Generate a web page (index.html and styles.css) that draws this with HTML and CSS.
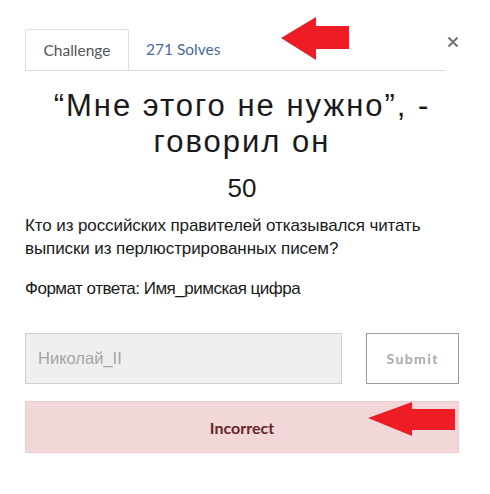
FILE: index.html
```html
<!DOCTYPE html>
<html lang="ru">
<head>
<meta charset="utf-8">
<link rel="stylesheet" href="styles.css">
</head>
<body>
<div class="modal">
  <div class="header">
    <ul class="tabs">
      <li class="tab active">Challenge</li>
      <li class="tab link">271 Solves</li>
    </ul>
    <button class="close" aria-label="Close">
      <svg width="12" height="12" viewBox="0 0 12 12"><path d="M1.5 1.5 L10.5 10.5 M10.5 1.5 L1.5 10.5" stroke="#777" stroke-width="2.2" stroke-linecap="butt"/></svg>
    </button>
  </div>
  <h1 class="title">“Мне этого не нужно”, - говорил он</h1>
  <div class="value">50</div>
  <p class="desc">Кто из российских правителей отказывался читать выписки из перлюстрированных писем?</p>
  <p class="desc fmt">Формат ответа: Имя_римская цифра</p>
  <div class="answer-row">
    <input class="answer" type="text" placeholder="Николай_II">
    <button class="submit">Submit</button>
  </div>
  <div class="alert">Incorrect</div>
</div>
<svg class="arrow arrow-top" width="70" height="46" viewBox="0 0 70 46"><polygon points="0,21 35,0 35,9 68,9 68,32 35,32 35,43" fill="#ee1c25"/></svg>
<svg class="arrow arrow-bottom" width="90" height="36" viewBox="0 0 90 36"><polygon points="0,16 44,0 44,7 87,7 87,28 44,28 44,34" fill="#ee1c25"/></svg>
</body>
</html>
```
FILE: styles.css
```css
html, body {
  margin: 0;
  padding: 0;
  background: #fff;
}
body {
  position: relative;
  width: 490px;
  height: 494px;
  overflow: hidden;
  font-family: "Liberation Sans", Arial, sans-serif;
  color: #222;
}
.modal {
  padding: 29px 31px 0 25px;
}
.header {
  display: flex;
  align-items: flex-start;
}
.tabs {
  list-style: none;
  margin: 0;
  padding: 0;
  display: flex;
  width: 420px;
  border-bottom: 1px solid #dedede;
  height: 41px;
}
.tab {
  font-family: Lato, "Liberation Sans", sans-serif;
  font-size: 15.5px;
  padding: 0 16px;
  line-height: 40px;
  height: 41px;
  box-sizing: border-box;
}
.tab.active {
  color: #555;
  border: 1px solid #dedede;
  border-bottom-color: #fff;
  border-radius: 3px 3px 0 0;
  width: 104px;
  text-align: center;
  padding: 0;
}
.tab.link {
  color: #4a6a9c;
  padding-left: 17px;
}
.close {
  margin-left: auto;
  margin-top: 7px;
  margin-right: 0;
  border: 0;
  background: none;
  padding: 0;
  width: 12px;
  height: 12px;
  display: flex;
}
.title {
  margin: 17px 0 0;
  font-weight: normal;
  font-size: 31px;
  line-height: 36px;
  letter-spacing: 2px;
  text-align: center;
  color: #1a1a1a;
  padding: 0 6px;
}
.value {
  text-align: center;
  font-size: 26px;
  line-height: 30px;
  margin-top: 13px;
  color: #1a1a1a;
}
.desc {
  margin: 11px 0 0;
  max-width: 420px;
  font-size: 17px;
  line-height: 23px;
  letter-spacing: -0.1px;
  color: #1a1a1a;
}
.desc.fmt {
  margin-top: 17px;
  letter-spacing: -0.5px;
}
.answer-row {
  display: flex;
  gap: 24px;
  margin-top: 33px;
}
.answer {
  width: 318px;
  height: 51px;
  box-sizing: border-box;
  background: #efefef;
  border: 1px solid #cfcfcf;
  padding: 0 12px;
  font-family: "Liberation Sans", Arial, sans-serif;
  font-size: 16.5px;
  outline: none;
}
.answer::placeholder {
  color: #a4a4a4;
}
.submit {
  width: 93px;
  height: 51px;
  box-sizing: border-box;
  background: #fff;
  border: 1px solid #9d9d9d;
  font-family: Lato, "Liberation Sans", sans-serif;
  font-weight: bold;
  font-size: 14px;
  letter-spacing: 1.4px;
  color: #a9a9a9;
  padding: 0;
}
.alert {
  margin-top: 17px;
  width: 434px;
  height: 52px;
  box-sizing: border-box;
  background: #f2d7d9;
  border: 1px solid #ebcdd0;
  display: flex;
  align-items: center;
  justify-content: center;
  font-family: Lato, "Liberation Sans", sans-serif;
  font-weight: bold;
  font-size: 16px;
  color: #66262b;
}
.arrow {
  position: absolute;
}
.arrow-top {
  left: 281px;
  top: 17px;
}
.arrow-bottom {
  left: 368px;
  top: 402px;
}
```
